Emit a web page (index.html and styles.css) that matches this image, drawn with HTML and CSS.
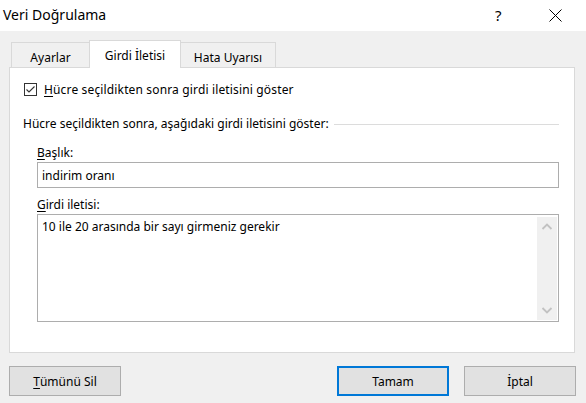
FILE: index.html
```html
<html>
    <head>
        <title>Veri Doğrulama</title>
        <link rel="stylesheet" href="styles.css">
    </head>
    <body>
        <div class="titlebar">
            <span class="title">Veri Doğrulama</span>
            <span class="help">?</span>
            <span class="close">
                <svg width="13" height="13" viewBox="0 0 13 13"><path d="M0.5 0.5 L12.5 12.5 M12.5 0.5 L0.5 12.5" stroke="#000" stroke-width="1" fill="none"/></svg>
            </span>
        </div>
        <div class="tabs">
            <div class="tab tab_first">Ayarlar</div>
            <div class="tab tab_active">Girdi İletisi</div>
            <div class="tab tab_last">Hata Uyarısı</div>
        </div>
        <div class="panel">
            <div class="check">
                <span class="box">
                    <svg width="11" height="11" viewBox="0 0 11 11"><path d="M1.5 5.5 L4 8 L9.5 2.5" stroke="#333" stroke-width="1.1" fill="none"/></svg>
                </span>
                <span><u>H</u>ücre seçildikten sonra girdi iletisini göster</span>
            </div>
            <div class="group">
                <span>Hücre seçildikten sonra, aşağıdaki girdi iletisini göster:</span>
                <span class="rule"></span>
            </div>
            <div class="fields">
                <div class="field_label"><u>B</u>aşlık:</div>
                <div class="input">indirim oranı</div>
                <div class="field_label"><u>G</u>irdi iletisi:</div>
                <div class="textarea">
                    <div class="text">10 ile 20 arasında bir sayı girmeniz gerekir</div>
                    <div class="scroll">
                        <svg width="20" height="20" viewBox="0 0 20 20"><path d="M5.5 12 L10 7.5 L14.5 12" stroke="#c2c2c2" stroke-width="1.8" fill="none"/></svg>
                        <svg width="20" height="20" viewBox="0 0 20 20"><path d="M5.5 8 L10 12.5 L14.5 8" stroke="#c2c2c2" stroke-width="1.8" fill="none"/></svg>
                    </div>
                </div>
            </div>
        </div>
        <div class="footer">
            <div class="button"><u>T</u>ümünü Sil</div>
            <div class="spacer"></div>
            <div class="button button_primary">Tamam</div>
            <div class="button">İptal</div>
        </div>
    </body>
</html>
```
FILE: styles.css
```css
* {
    font-family: 'Segoe UI', 'Noto Sans', sans-serif;
    box-sizing: border-box;
}
body {
    margin: 0;
    width: 586px;
    height: 403px;
    overflow: hidden;
    background-color: #f0f0f0;
    font-size: 12px;
    color: #000;
}
u {
    text-decoration-thickness: 1px;
    text-underline-offset: 2px;
}
.titlebar {
    display: flex;
    align-items: center;
    height: 31px;
    background-color: #fff;
    padding-left: 3px;
}
.title {
    font-size: 14px;
    flex-grow: 1;
    padding-bottom: 2px;
}
.help {
    font-size: 15px;
    width: 12px;
    margin-right: 42px;
    padding-bottom: 2px;
}
.close {
    display: flex;
    margin-right: 24px;
}
.tabs {
    display: flex;
    align-items: flex-end;
    margin-top: 9px;
    padding-left: 11px;
    height: 27px;
}
.tab {
    height: 25px;
    border: 1px solid #d9d9d9;
    border-bottom: 0;
    background-color: #f0f0f0;
    text-align: center;
    padding-top: 6px;
}
.tab_first {
    width: 78px;
    border-right: 0;
}
.tab_active {
    width: 92px;
    height: 28px;
    margin-bottom: -1px;
    background-color: #fff;
    padding-top: 6px;
    position: relative;
    z-index: 1;
}
.tab_last {
    width: 95px;
    border-left: 0;
}
.panel {
    margin: 0 11px 0 9px;
    height: 286px;
    background-color: #fff;
    border: 1px solid #d9d9d9;
    padding: 15px 14px 0 14px;
}
.check {
    display: flex;
    align-items: center;
    height: 13px;
    letter-spacing: 0.15px;
}
.box {
    display: flex;
    width: 13px;
    height: 13px;
    border: 1px solid #333;
    margin-right: 7px;
}
.group {
    display: flex;
    align-items: center;
    margin-top: 19px;
    margin-left: -1px;
    margin-right: 1px;
}
.rule {
    flex-grow: 1;
    height: 1px;
    background-color: #dcdcdc;
    margin-left: 5px;
    margin-top: 1px;
}
.fields {
    margin: 12px 1px 0 13px;
}
.field_label {
    height: 18px;
}
.input {
    height: 26px;
    border: 1px solid #adadad;
    padding: 4px 0 0 4px;
    margin-bottom: 8px;
}
.textarea {
    display: flex;
    height: 108px;
    border: 1px solid #adadad;
    padding: 2px 1px 1px 4px;
}
.text {
    flex-grow: 1;
    padding-top: 1px;
}
.scroll {
    width: 20px;
    display: flex;
    flex-direction: column;
    justify-content: space-between;
    background-color: #f0f0f0;
}
.footer {
    display: flex;
    margin: 13px 10px 0 9px;
}
.spacer {
    flex-grow: 1;
}
.button {
    width: 112px;
    height: 30px;
    border: 1px solid #adadad;
    background-color: #e1e1e1;
    display: flex;
    align-items: center;
    justify-content: center;
}
.button_primary {
    border: 2px solid #0078d7;
    margin-right: 15px;
}
```
